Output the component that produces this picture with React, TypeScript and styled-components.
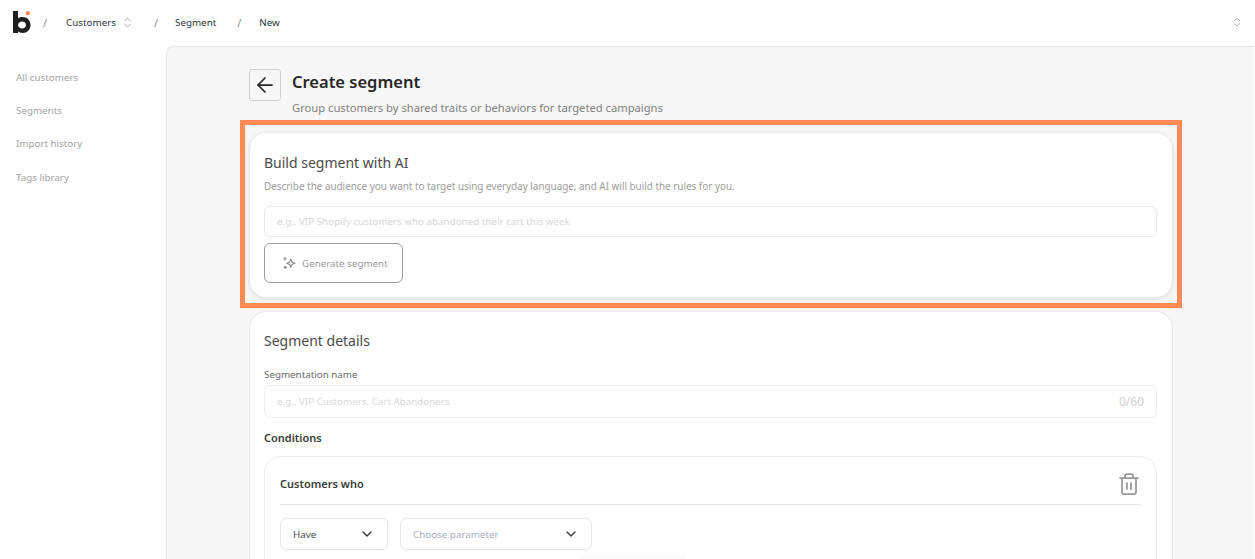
import styled, { createGlobalStyle } from 'styled-components';
import { ArrowLeft, ChevronDown, ChevronsUpDown, Trash2 } from 'lucide-react';

const GlobalStyle = createGlobalStyle`
  html, body {
    margin: 0;
    height: 100%;
    overflow: hidden;
    background: #fff;
    font-family: "Noto Sans", "Open Sans", sans-serif;
  }
  * { box-sizing: border-box; }
`;

function Logo() {
  return (
    <svg width="18" height="22" viewBox="0 0 18 22">
      <path
        fillRule="evenodd"
        d="M0 0h5v7.4C6.2 6.5 7.7 6 9.4 6c4.7 0 8.1 3.5 8.1 8s-3.4 8-8.1 8c-1.7 0-3.2-.5-4.4-1.4V22H0V0zm9.1 10.4c-2.2 0-4 1.6-4 3.6s1.8 3.6 4 3.6 3.9-1.6 3.9-3.6-1.7-3.6-3.9-3.6z"
        fill="#1f1f1f"
      />
      <circle cx="14.8" cy="2.2" r="2.2" fill="#ff8a50" />
    </svg>
  );
}

function SparkIcon() {
  return (
    <svg width="14" height="14" viewBox="0 0 14 14" fill="none" stroke="#8a8a8a" strokeWidth="1.1">
      <path d="M8.8 3.4 10 6l2.6 1.2L10 8.4l-1.2 2.6-1.2-2.6L5 7.2 7.6 6z" />
      <path d="M3 1v3.4M1.3 2.7h3.4M3.2 9.8v3.2M1.6 11.4h3.2" />
    </svg>
  );
}

export default function App() {
  return (
    <Page>
      <GlobalStyle />
      <Header>
        <LogoSlot><Logo /></LogoSlot>
        <Slash>/</Slash>
        <Crumb $left={19}>Customers</Crumb>
        <CrumbIcon><ChevronsUpDown size={13} strokeWidth={1.5} /></CrumbIcon>
        <Slash $left={20}>/</Slash>
        <Crumb $left={17}>Segment</Crumb>
        <Slash $left={21}>/</Slash>
        <Crumb $left={18}>New</Crumb>
        <HeaderEnd><ChevronsUpDown size={12} strokeWidth={1.5} /></HeaderEnd>
      </Header>
      <Body>
        <Sidebar>
          <NavItem>All customers</NavItem>
          <NavItem>Segments</NavItem>
          <NavItem>Import history</NavItem>
          <NavItem>Tags library</NavItem>
        </Sidebar>
        <Main>
          <Column>
            <TitleRow>
              <BackButton><ArrowLeft size={24} strokeWidth={1.75} /></BackButton>
              <TitleText>
                <Title>Create segment</Title>
                <Subtitle>Group customers by shared traits or behaviors for targeted campaigns</Subtitle>
              </TitleText>
            </TitleRow>
            <AiCard>
              <CardTitle>Build segment with AI</CardTitle>
              <CardHint>Describe the audience you want to target using everyday language, and AI will build the rules for you.</CardHint>
              <AiInput>e.g., VIP Shopify customers who abandoned their cart this week</AiInput>
              <GenerateButton>
                <SparkIcon />
                Generate segment
              </GenerateButton>
            </AiCard>
            <DetailsCard>
              <CardTitle>Segment details</CardTitle>
              <FieldLabel>Segmentation name</FieldLabel>
              <NameInput>
                <span>e.g., VIP Customers, Cart Abandoners</span>
                <Counter>0/60</Counter>
              </NameInput>
              <SectionLabel>Conditions</SectionLabel>
              <ConditionCard>
                <ConditionHead>
                  <ConditionTitle>Customers who</ConditionTitle>
                  <Trash2 size={24} strokeWidth={1.75} color="#9a9a9a" />
                </ConditionHead>
                <SelectRow>
                  <Select $width={108}>
                    Have
                    <ChevronDown size={16} strokeWidth={2} color="#333" />
                  </Select>
                  <Select $width={192} $muted>
                    Choose parameter
                    <ChevronDown size={16} strokeWidth={2} color="#333" />
                  </Select>
                </SelectRow>
                <FaintBar />
              </ConditionCard>
            </DetailsCard>
          </Column>
        </Main>
      </Body>
      <Highlight />
    </Page>
  );
}

const Page = styled.div`
  position: relative;
  width: 1255px;
  height: 559px;
  overflow: hidden;
  background: #fff;
`;

const Header = styled.header`
  display: flex;
  align-items: center;
  height: 46px;
  padding: 0 0 2px 13px;
  font-size: 9.8px;
  color: #2b3340;
`;

const LogoSlot = styled.div`
  display: flex;
  width: 18px;
  height: 22px;
  margin-right: 12px;
`;

const Slash = styled.span<{ $left?: number }>`
  margin-left: ${(p) => p.$left ?? 0}px;
  color: #8b8b8b;
  font-size: 11px;
`;

const Crumb = styled.span<{ $left: number }>`
  margin-left: ${(p) => p.$left}px;
`;

const CrumbIcon = styled.span`
  display: flex;
  margin-left: 5px;
  color: #8c8c8c;
`;

const HeaderEnd = styled.span`
  display: flex;
  margin-left: auto;
  margin-right: 12px;
  color: #9a9a9a;
`;

const Body = styled.div`
  display: flex;
  height: 513px;
`;

const Sidebar = styled.nav`
  display: flex;
  flex-direction: column;
  gap: 16.2px;
  width: 166px;
  padding: 24px 0 0 16px;
`;

const NavItem = styled.div`
  height: 17px;
  line-height: 15px;
  font-size: 9.8px;
  color: #a3a3a3;
`;

const Main = styled.main`
  flex: 1;
  display: flex;
  margin-right: 1px;
  padding-left: 82px;
  background: #f7f7f7;
  border: 1px solid #e6e6e6;
  border-width: 1px 0 0 1px;
  border-top-left-radius: 7px;
  overflow: hidden;
`;

const Column = styled.div`
  flex-shrink: 0;
  width: 924px;
  padding-top: 22px;
  display: flex;
  flex-direction: column;
`;

const TitleRow = styled.div`
  flex-shrink: 0;
  display: flex;
  gap: 11px;
  height: 63px;
`;

const BackButton = styled.button`
  display: flex;
  align-items: center;
  justify-content: center;
  width: 32px;
  height: 32px;
  padding: 0;
  border: 1px solid #cfcfcf;
  border-radius: 3px;
  background: #f7f7f7;
  color: #262626;
`;

const TitleText = styled.div`
  display: flex;
  flex-direction: column;
`;

const Title = styled.h1`
  margin: 0;
  font-size: 16.5px;
  line-height: 25px;
  font-weight: 600;
  color: #262626;
`;

const Subtitle = styled.p`
  margin: 6px 0 0;
  font-size: 11.2px;
  line-height: 16px;
  color: #7f7f7f;
`;

const Card = styled.section`
  flex-shrink: 0;
  background: #fff;
  border: 1px solid #e8e8e8;
  border-radius: 17px;
  padding: 19px 15px 0 14px;
`;

const AiCard = styled(Card)`
  height: 166px;
  box-shadow: 0 1px 4px rgba(0, 0, 0, 0.1);
`;

const DetailsCard = styled(Card)`
  flex: 1;
  margin-top: 13px;
  padding-top: 18px;
  border-bottom: 0;
  border-radius: 17px 17px 0 0;
`;

const CardTitle = styled.h2`
  margin: 0;
  font-size: 14px;
  line-height: 22px;
  font-weight: 400;
  color: #4a4a4a;
`;

const CardHint = styled.p`
  margin: 5px 0 0;
  font-size: 9.9px;
  line-height: 14px;
  color: #9c9c9c;
`;

const AiInput = styled.div`
  display: flex;
  align-items: center;
  height: 31px;
  margin-top: 13px;
  padding-left: 12px;
  border: 1px solid #e9e9e9;
  border-radius: 6px;
  font-size: 9.8px;
  color: #d6d6d6;
`;

const GenerateButton = styled.button`
  display: flex;
  align-items: center;
  gap: 6px;
  width: 139px;
  height: 40px;
  margin-top: 6px;
  padding: 0 0 0 17px;
  border: 1px solid #9c9c9c;
  border-radius: 6px;
  background: #fff;
  font-family: inherit;
  font-size: 9.8px;
  color: #9a9a9a;
`;

const FieldLabel = styled.div`
  margin-top: 16px;
  font-size: 9.8px;
  line-height: 14px;
  color: #6b6b6b;
`;

const NameInput = styled.div`
  display: flex;
  align-items: center;
  justify-content: space-between;
  height: 33px;
  margin-top: 3px;
  padding: 0 12px;
  border: 1px solid #efefef;
  border-radius: 6px;
  font-size: 9.8px;
  color: #d8d8d8;
`;

const Counter = styled.span`
  font-size: 12px;
  color: #cfcfcf;
`;

const SectionLabel = styled.div`
  margin-top: 12px;
  font-size: 11px;
  line-height: 16px;
  font-weight: 600;
  color: #3a3a3a;
`;

const ConditionCard = styled.div`
  height: 140px;
  margin-top: 10px;
  padding: 0 15px;
  border: 1px solid #ececec;
  border-radius: 17px;
`;

const ConditionHead = styled.div`
  display: flex;
  align-items: center;
  justify-content: space-between;
  height: 48px;
  padding-top: 6px;
  border-bottom: 1px solid #e4e4e4;
`;

const ConditionTitle = styled.span`
  font-size: 11px;
  font-weight: 600;
  color: #3a3a3a;
`;

const SelectRow = styled.div`
  display: flex;
  gap: 12px;
  margin-top: 13px;
`;

const Select = styled.div<{ $width: number; $muted?: boolean }>`
  display: flex;
  align-items: center;
  justify-content: space-between;
  width: ${(p) => p.$width}px;
  height: 32px;
  padding: 0 12px;
  border: 1px solid #e6e6e6;
  border-radius: 6px;
  font-size: 9.8px;
  color: ${(p) => (p.$muted ? '#a8adb8' : '#4a4a4a')};
`;

const FaintBar = styled.div`
  width: 105px;
  height: 4px;
  margin: 6px 0 0 300px;
  background: #fafafa;
`;

const Highlight = styled.div`
  position: absolute;
  left: 240px;
  top: 120px;
  width: 942px;
  height: 188px;
  border: 5px solid #ff8a56;
  pointer-events: none;
`;
